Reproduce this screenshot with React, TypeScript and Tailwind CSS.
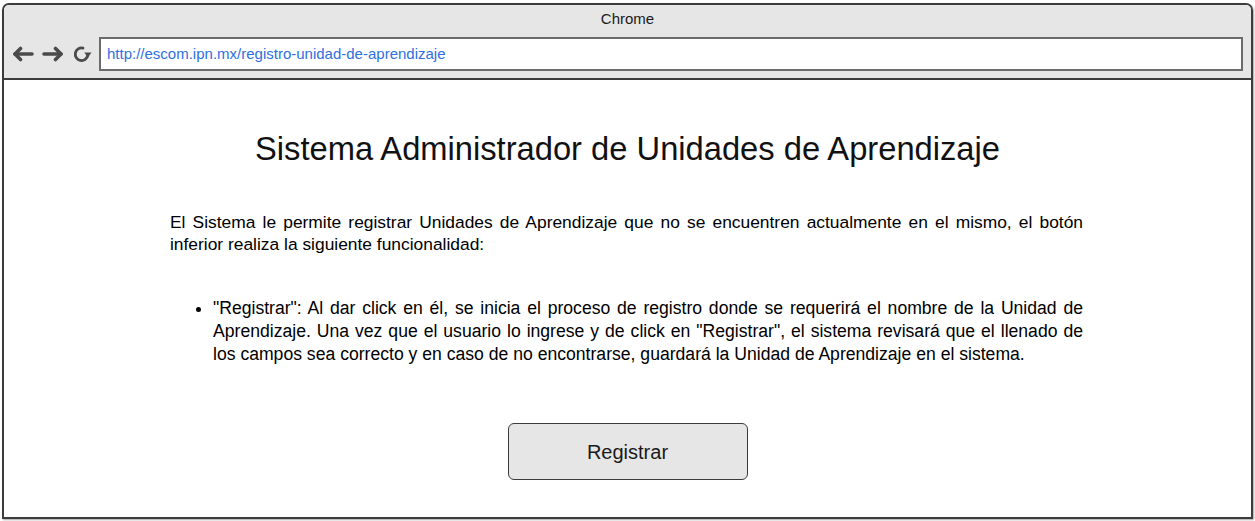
import * as React from 'react';

const font = { fontFamily: '"Liberation Sans", Arial, sans-serif' };

function BackIcon() {
    return (
        <svg width="22" height="16" viewBox="0 0 22 16" fill="none" stroke="#4a4a4a" strokeWidth="3.6" strokeLinecap="round" strokeLinejoin="round">
            <path d="M20 8H3" />
            <path d="M8.5 2.5L3 8l5.5 5.5" />
        </svg>
    );
}

function ForwardIcon() {
    return (
        <svg width="22" height="16" viewBox="0 0 22 16" fill="none" stroke="#4a4a4a" strokeWidth="3.6" strokeLinecap="round" strokeLinejoin="round">
            <path d="M2 8h17" />
            <path d="M13.5 2.5L19 8l-5.5 5.5" />
        </svg>
    );
}

function ReloadIcon() {
    return (
        <svg width="20" height="18" viewBox="0 0 20 18" fill="none">
            <path d="M11 3.1A6.3 6.3 0 1 0 15.8 10.2" stroke="#4a4a4a" strokeWidth="2.8" strokeLinecap="round" />
            <path d="M12.3 7.6h7.2L15.9 12.4z" fill="#4a4a4a" />
        </svg>
    );
}

export default function App() {
    return (
        <div className="w-[1255px] h-[521px] bg-white pt-[3px] pl-[2px]" style={font}>
            <div className="w-[1251px] h-[516px] border-2 border-[#3c3c3c] rounded-t-[7px] flex flex-col overflow-hidden shadow-[1px_1px_2px_rgba(0,0,0,0.35)]">
                {/* Browser chrome */}
                <div className="h-[75px] bg-[#e6e6e6] border-b-2 border-[#3c3c3c] flex flex-col shrink-0">
                    <div className="h-[28px] flex items-center justify-center text-[15px] text-[#1a1a1a]">Chrome</div>
                    <div className="flex items-center pl-[8px] pr-[8px] pt-[4px]">
                        <div className="flex items-center gap-[8px] w-[87px]">
                            <BackIcon />
                            <ForwardIcon />
                            <ReloadIcon />
                        </div>
                        <div className="flex-1 h-[34px] bg-white border-2 border-[#6b6b6b] flex items-center pl-[6px] text-[15px] text-[#2f6fe0]">
                            http://escom.ipn.mx/registro-unidad-de-aprendizaje
                        </div>
                    </div>
                </div>

                {/* Page */}
                <div className="flex-1 bg-white flex flex-col items-center text-black">
                    <h1 className="mt-[50px] text-[32.7px] leading-[38px] text-[#111]">Sistema Administrador de Unidades de Aprendizaje</h1>
                    <p className="mt-[43px] w-[913px] -translate-x-[1px] text-[17.4px] leading-[22px] text-justify">
                        El Sistema le permite registrar Unidades de Aprendizaje que no se encuentren actualmente en el mismo, el botón inferior realiza la siguiente funcionalidad:
                    </p>
                    <ul className="mt-[42px] w-[913px] -translate-x-[1px] pl-[43px] list-disc text-[17.6px] leading-[23px] text-justify">
                        <li>
                            "Registrar": Al dar click en él, se inicia el proceso de registro donde se requerirá el nombre de la Unidad de Aprendizaje. Una vez que el usuario lo ingrese y de click en "Registrar", el sistema revisará que el llenado de los campos sea correcto y en caso de no encontrarse, guardará la Unidad de Aprendizaje en el sistema.
                        </li>
                    </ul>
                    <button className="mt-[57px] w-[240px] h-[57px] bg-[#e6e6e6] border border-[#3c3c3c] rounded-[6px] text-[20px] text-[#1a1a1a]">
                        Registrar
                    </button>
                </div>
            </div>
        </div>
    );
}
